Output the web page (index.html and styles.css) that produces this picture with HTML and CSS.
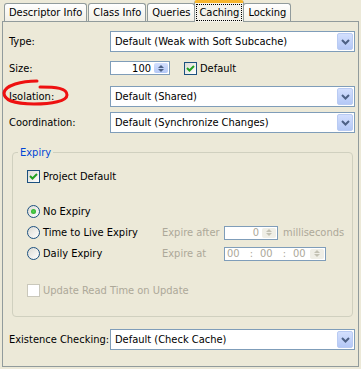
FILE: index.html
```html
<!doctype html>
<html>
<head>
    <title>Caching</title>
    <link rel="stylesheet" href="styles.css">
</head>
<body>
    <div class="window">
        <div class="tabs">
            <div class="tab">Descriptor Info</div>
            <div class="tab">Class Info</div>
            <div class="tab">Queries</div>
            <div class="tab active"><span class="focus">Caching</span></div>
            <div class="tab">Locking</div>
        </div>
        <div class="panel">
            <div class="row row-type">
                <div class="label">Type:</div>
                <div class="combo"><span class="value">Default (Weak with Soft Subcache)</span><span class="drop"><svg width="9" height="6" viewBox="0 0 9 6"><path d="M1 1 L4.5 4.5 L8 1" fill="none" stroke="#4d6185" stroke-width="2"/></svg></span></div>
            </div>
            <div class="row row-size">
                <div class="label">Size:</div>
                <div class="spinner size-spin"><span class="num">100</span><span class="spin"><i class="up"></i><i class="down"></i></span></div>
                <div class="check on"><span class="box"><svg width="9" height="9" viewBox="0 0 9 9"><path d="M1 4 L3.5 6.5 L8 2" fill="none" stroke="#21a121" stroke-width="2"/></svg></span>Default</div>
            </div>
            <div class="row row-isolation">
                <div class="label">Isolation:</div>
                <div class="combo"><span class="value">Default (Shared)</span><span class="drop"><svg width="9" height="6" viewBox="0 0 9 6"><path d="M1 1 L4.5 4.5 L8 1" fill="none" stroke="#4d6185" stroke-width="2"/></svg></span></div>
            </div>
            <div class="row row-coord">
                <div class="label">Coordination:</div>
                <div class="combo"><span class="value">Default (Synchronize Changes)</span><span class="drop"><svg width="9" height="6" viewBox="0 0 9 6"><path d="M1 1 L4.5 4.5 L8 1" fill="none" stroke="#4d6185" stroke-width="2"/></svg></span></div>
            </div>

            <div class="group">
                <div class="group-title">Expiry</div>
                <div class="grow grow-project">
                    <div class="check on"><span class="box"><svg width="9" height="9" viewBox="0 0 9 9"><path d="M1 4 L3.5 6.5 L8 2" fill="none" stroke="#21a121" stroke-width="2"/></svg></span>Project Default</div>
                </div>
                <div class="grow grow-first">
                    <div class="opt"><span class="radio on"><i></i></span>No Expiry</div>
                </div>
                <div class="grow">
                    <div class="opt"><span class="radio"></span>Time to Live Expiry</div>
                    <div class="sub">Expire after</div>
                    <div class="spinner ms-spin disabled"><span class="num">0</span><span class="spin"><i class="up"></i><i class="down"></i></span></div>
                    <div class="unit">milliseconds</div>
                </div>
                <div class="grow">
                    <div class="opt"><span class="radio"></span>Daily Expiry</div>
                    <div class="sub">Expire at</div>
                    <div class="spinner time-spin disabled"><span class="time">00</span><span class="colon">:</span><span class="time">00</span><span class="colon">:</span><span class="time">00</span><span class="spin"><i class="up"></i><i class="down"></i></span></div>
                </div>
                <div class="grow grow-update">
                    <div class="check disabled"><span class="box"></span>Update Read Time on Update</div>
                </div>
            </div>

            <div class="row row-exist">
                <div class="label">Existence Checking:</div>
                <div class="combo"><span class="value">Default (Check Cache)</span><span class="drop"><svg width="9" height="6" viewBox="0 0 9 6"><path d="M1 1 L4.5 4.5 L8 1" fill="none" stroke="#4d6185" stroke-width="2"/></svg></span></div>
            </div>
        </div>

        <!-- hand drawn marker around the Isolation label -->
        <svg class="mark" width="80" height="40" viewBox="0 0 80 40">
            <path d="M37 5 C22 5 5 9 4 17 C4 25 18 28 34 28 C52 28 67 25 67 19 C67 12 56 11 40 11" fill="none" stroke="#ee1111" stroke-width="3" stroke-linecap="round"/>
        </svg>
    </div>
</body>
</html>
```

FILE: styles.css
```css
body {
    margin: 0;
    background-color: #ece9d8;
    font-family: "DejaVu Sans Condensed", "Liberation Sans", sans-serif;
    font-size: 11px;
    color: #000;
}
.window {
    position: relative;
    width: 361px;
    height: 369px;
    padding: 0 2px;
    box-sizing: border-box;
}

/* tab strip */
.tabs {
    display: flex;
    align-items: flex-end;
    height: 21px;
    padding-left: 2px;
    gap: 1px;
}
.tab {
    height: 18px;
    line-height: 18px;
    padding: 0 4px;
    border: 1px solid #919b9c;
    border-bottom: none;
    border-radius: 3px 3px 0 0;
    background: linear-gradient(#ffffff, #f1efe6);
    box-sizing: border-box;
}
.tab.active {
    position: relative;
    height: 22px;
    margin: 0 -2px -1px;
    padding: 2px 2px 0;
    border-top: 3px solid #f7b52b;
    background: #f4f2ea;
    z-index: 1;
}
.tab .focus {
    display: block;
    height: 15px;
    line-height: 15px;
    padding: 0 2px;
    outline: 1px dotted #000;
}

/* panel */
.panel {
    border: 1px solid #919b9c;
    height: 346px;
    box-sizing: border-box;
    padding: 9px 3px 0 6px;
}
.row {
    display: flex;
    align-items: center;
}
.label {
    width: 101px;
    flex: none;
}
.row-size {
    margin-top: 9px;
}
.row-isolation {
    margin-top: 11px;
}
.row-coord {
    margin-top: 5px;
}
.row-exist {
    margin-top: 12px;
}

/* combo box */
.combo {
    flex: 1;
    height: 21px;
    border: 1px solid #7f9db9;
    background: #fff;
    box-sizing: border-box;
    display: flex;
    align-items: center;
    padding: 1px;
}
.combo .value {
    flex: 1;
    padding-left: 3px;
}
.drop {
    width: 16px;
    height: 17px;
    border: 1px solid #b9cbf3;
    border-radius: 2px;
    background: linear-gradient(#d3dffd, #b4c8f6);
    box-sizing: border-box;
    display: flex;
    align-items: center;
    justify-content: center;
}

/* spinners */
.spinner {
    height: 14px;
    border: 1px solid #7f9db9;
    background: #fff;
    box-sizing: border-box;
    display: flex;
    align-items: center;
    padding: 0 1px 0 2px;
}
.spinner .num {
    flex: 1;
    text-align: right;
    padding-right: 3px;
}
.size-spin {
    width: 60px;
}
.spin {
    width: 14px;
    height: 10px;
    display: flex;
    flex-direction: column;
    align-items: center;
    justify-content: center;
    gap: 1px;
    border-radius: 2px;
    background: linear-gradient(#d3dffd, #b4c8f6);
}
.spin i {
    width: 0;
    height: 0;
    border-left: 3px solid transparent;
    border-right: 3px solid transparent;
}
.spin .up {
    border-bottom: 3px solid #4d6185;
}
.spin .down {
    border-top: 3px solid #4d6185;
}
.spinner.disabled {
    color: #aca899;
}
.spinner.disabled .spin {
    background: #efeee6;
}
.spinner.disabled .spin .up {
    border-bottom-color: #c3c1b3;
}
.spinner.disabled .spin .down {
    border-top-color: #c3c1b3;
}
.ms-spin {
    width: 54px;
}
.time-spin {
    width: 102px;
}
.time-spin .time {
    width: 16px;
}
.time-spin .colon {
    width: 17px;
    text-align: center;
}
.time-spin .spin {
    margin-left: auto;
}

/* check boxes and radios */
.check {
    display: flex;
    align-items: center;
    gap: 3px;
}
.row-size .check {
    margin-left: 14px;
}
.box {
    width: 13px;
    height: 13px;
    border: 1px solid #1c5180;
    background: linear-gradient(135deg, #dcdbd4, #ffffff);
    box-sizing: border-box;
    display: flex;
    align-items: center;
    justify-content: center;
}
.check.disabled {
    color: #aca899;
}
.check.disabled .box {
    border-color: #cac8bb;
    background: #fff;
}
.opt {
    width: 135px;
    flex: none;
    display: flex;
    align-items: center;
    gap: 3px;
}
.radio {
    width: 13px;
    height: 13px;
    border: 1px solid #1c5180;
    border-radius: 50%;
    background: linear-gradient(135deg, #dcdbd4, #ffffff);
    box-sizing: border-box;
    display: flex;
    align-items: center;
    justify-content: center;
}
.radio i {
    width: 5px;
    height: 5px;
    border-radius: 50%;
    background: radial-gradient(#55d651, #21a121);
}

/* expiry group */
.group {
    margin: 19px 2px 0 3px;
    border: 1px solid #d0d0bf;
    border-radius: 4px;
    padding: 0 0 15px 14px;
}
.group-title {
    width: fit-content;
    margin: -7px 0 0 -9px;
    padding: 0 2px;
    height: 13px;
    line-height: 13px;
    color: #0046d5;
    background: #ece9d8;
}
.grow {
    display: flex;
    align-items: center;
    height: 21px;
}
.grow-project {
    margin-top: 7px;
}
.grow-first {
    margin-top: 14px;
}
.grow-update {
    margin-top: 16px;
}
.sub {
    width: 62px;
    color: #aca899;
}
.unit {
    margin-left: 5px;
    color: #aca899;
}

/* annotation */
.mark {
    position: absolute;
    left: 0;
    top: 76px;
}
```
